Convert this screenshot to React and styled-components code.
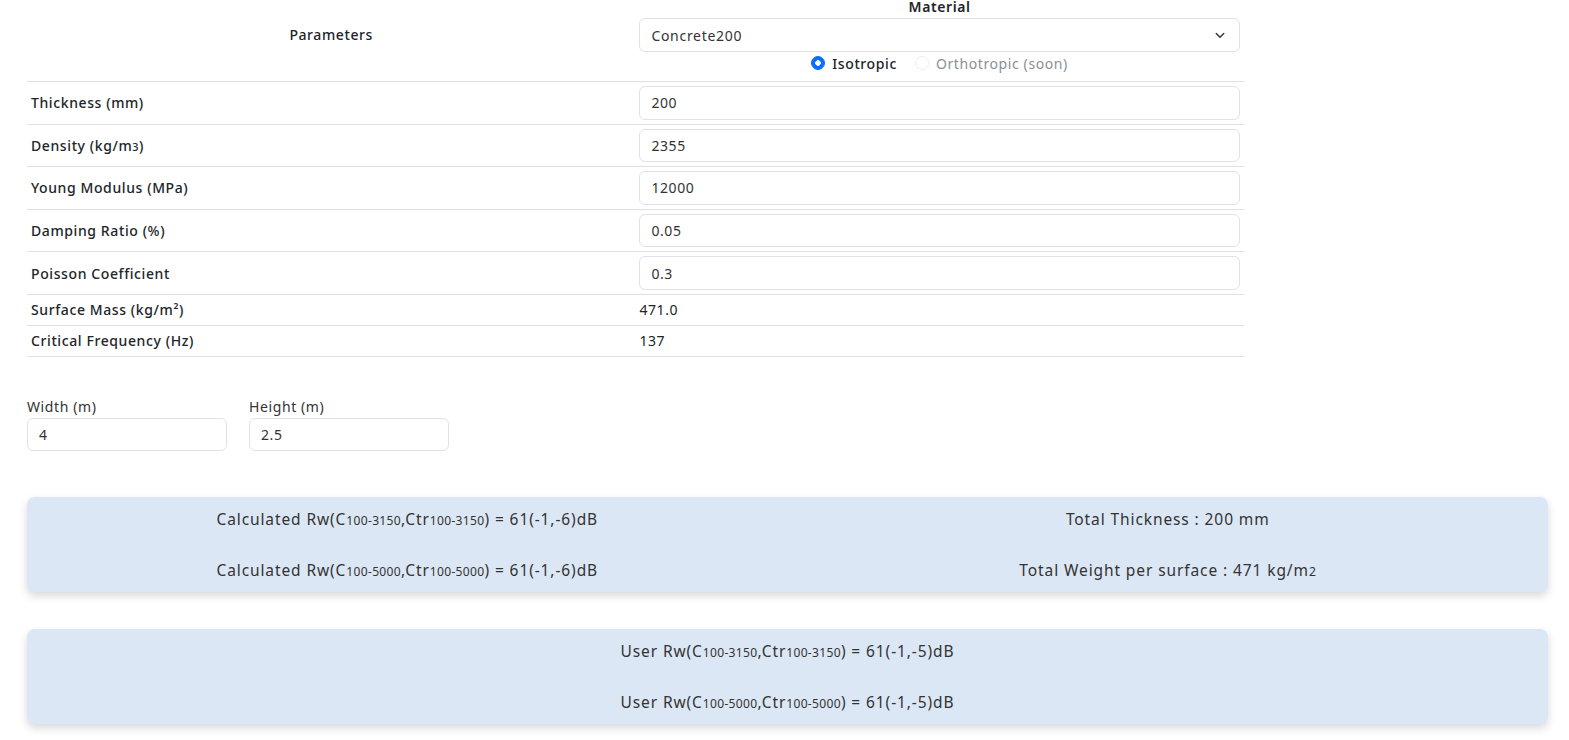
import React, { useState } from 'react';
import styled, { createGlobalStyle } from 'styled-components';

const GlobalStyle = createGlobalStyle`
  body {
    margin: 0;
    font-family: "Noto Sans", "Open Sans", sans-serif;
    letter-spacing: 0.6px;
    color: #212529;
    background: #fff;
  }
  * { box-sizing: border-box; }
`;

const Small = styled.span`
  font-size: 0.78em;
  letter-spacing: 0.3px;
`;

function Chevron() {
  return (
    <svg width="12" height="12" viewBox="0 0 16 16" fill="none">
      <path d="M3 6l5 5 5-5" stroke="#343a40" strokeWidth="2" strokeLinecap="round" strokeLinejoin="round" />
    </svg>
  );
}

function Rw({ prefix, range, value }) {
  return (
    <Line>
      {prefix} Rw(C<Small>{range}</Small>,Ctr<Small>{range}</Small>) = {value}dB
    </Line>
  );
}

function App() {
  const [material, setMaterial] = useState('Concrete200');
  const [width, setWidth] = useState('4');
  const [height, setHeight] = useState('2.5');

  const layers = [
    { label: 'Thickness (mm)', value: '200' },
    { label: <>Density (kg/m<Small>3</Small>)</>, value: '2355' },
    { label: 'Young Modulus (MPa)', value: '12000' },
    { label: 'Damping Ratio (%)', value: '0.05' },
    { label: 'Poisson Coefficient', value: '0.3' },
  ];

  return (
    <Page>
      <GlobalStyle />
      <Table>
        <tbody>
          <tr>
            <HeadCell>Parameters</HeadCell>
            <MaterialCell>
              <MaterialLabel>Material</MaterialLabel>
              <SelectWrap>
                <Select value={material} onChange={e => setMaterial(e.target.value)}>
                  <option>Concrete200</option>
                </Select>
                <ChevronBox>
                  <Chevron />
                </ChevronBox>
              </SelectWrap>
              <RadioGroup>
                <RadioLabel>
                  <Radio $checked />
                  Isotropic
                </RadioLabel>
                <RadioLabel $disabled>
                  <Radio $disabled />
                  Orthotropic (soon)
                </RadioLabel>
              </RadioGroup>
            </MaterialCell>
          </tr>
          {layers.map((row, i) => (
            <tr key={i}>
              <LabelCell>{row.label}</LabelCell>
              <ValueCell>
                <Input defaultValue={row.value} />
              </ValueCell>
            </tr>
          ))}
          <tr>
            <LabelCell>Surface Mass (kg/m²)</LabelCell>
            <ValueCell>471.0</ValueCell>
          </tr>
          <tr>
            <LabelCell>Critical Frequency (Hz)</LabelCell>
            <ValueCell>137</ValueCell>
          </tr>
        </tbody>
      </Table>

      <Dimensions>
        <Field>
          <FieldLabel>Width (m)</FieldLabel>
          <SmallInput value={width} onChange={e => setWidth(e.target.value)} />
        </Field>
        <Field>
          <FieldLabel>Height (m)</FieldLabel>
          <SmallInput value={height} onChange={e => setHeight(e.target.value)} />
        </Field>
      </Dimensions>

      <ResultBox $cols={2}>
        <Column>
          <Rw prefix="Calculated" range="100-3150" value="61(-1,-6)" />
          <Rw prefix="Calculated" range="100-5000" value="61(-1,-6)" />
        </Column>
        <Column>
          <Line>Total Thickness : 200 mm</Line>
          <Line>Total Weight per surface : 471 kg/m<Small>2</Small></Line>
        </Column>
      </ResultBox>

      <ResultBox $cols={1}>
        <Column>
          <Rw prefix="User" range="100-3150" value="61(-1,-5)" />
          <Rw prefix="User" range="100-5000" value="61(-1,-5)" />
        </Column>
      </ResultBox>
    </Page>
  );
}

const Page = styled.div`
  padding: 0 21px 20px 27px;
`;

const Table = styled.table`
  width: 80%;
  border-collapse: collapse;
  table-layout: fixed;
  font-size: 14px;
  font-weight: 500;

  td {
    width: 50%;
    border-bottom: 1px solid #dee2e6;
  }
`;

const HeadCell = styled.td`
  text-align: center;
  vertical-align: middle;
  padding: 0 0 12px;
`;

const MaterialCell = styled.td`
  padding: 0 4px 8px;
  text-align: center;
`;

const MaterialLabel = styled.div`
  font-weight: 600;
  line-height: 14px;
  margin-bottom: 4px;
`;

const SelectWrap = styled.div`
  position: relative;
`;

const Select = styled.select`
  appearance: none;
  display: block;
  width: 100%;
  height: 34px;
  padding: 0 32px 0 11px;
  border: 1px solid #dee2e6;
  border-radius: 6px;
  background: #fff;
  font: inherit;
  font-weight: 400;
  letter-spacing: 0.7px;
  color: #333;
  outline: none;
`;

const ChevronBox = styled.span`
  position: absolute;
  right: 14px;
  top: 11px;
  display: flex;
  pointer-events: none;
`;

const RadioGroup = styled.div`
  display: flex;
  justify-content: center;
  gap: 18px;
  margin-top: 1px;
  height: 20px;
  align-items: center;
`;

const RadioLabel = styled.label`
  display: flex;
  align-items: center;
  gap: 7px;
  color: ${p => (p.$disabled ? '#8a8f94' : '#212529')};
  font-weight: ${p => (p.$disabled ? 400 : 500)};
`;

const Radio = styled.span`
  width: 14px;
  height: 14px;
  border-radius: 50%;
  border: 1px solid ${p => (p.$checked ? '#0d6efd' : '#e9ecef')};
  background: ${p => (p.$checked ? 'radial-gradient(circle, #fff 0 2.5px, #0d6efd 3px)' : '#fff')};
`;

const LabelCell = styled.td`
  padding: 4px;
  height: 31px;
`;

const ValueCell = styled.td`
  padding: 4px;
  font-weight: 400;
  color: #212529;
`;

const Input = styled.input`
  display: block;
  width: 100%;
  height: 33.6px;
  padding: 0 11px;
  border: 1px solid #dee2e6;
  border-radius: 6px;
  font: inherit;
  font-weight: 400;
  letter-spacing: 0.6px;
  color: #333;
  outline: none;
`;

const Dimensions = styled.div`
  display: flex;
  gap: 22px;
  margin-top: 41px;
`;

const Field = styled.div`
  display: flex;
  flex-direction: column;
  gap: 3px;
`;

const FieldLabel = styled.label`
  font-size: 14px;
  color: #333;
  line-height: 17px;
`;

const SmallInput = styled(Input)`
  width: 200px;
  height: 33px;
  font-size: 14px;
`;

const ResultBox = styled.div`
  display: grid;
  grid-template-columns: repeat(${p => p.$cols}, 1fr);
  margin-top: ${p => (p.$cols === 2 ? '46px' : '37px')};
  padding: 12px 0;
  background: #dce7f5;
  border-radius: 8px;
  box-shadow: 0 4px 8px rgba(40, 40, 60, 0.18);
  color: #333;
  font-size: 15.5px;
  letter-spacing: 0.9px;
`;

const Column = styled.div`
  display: flex;
  flex-direction: column;
  align-items: center;
  gap: 31px;
`;

const Line = styled.div`
  height: 20px;
  line-height: 20px;
`;

export default App;
